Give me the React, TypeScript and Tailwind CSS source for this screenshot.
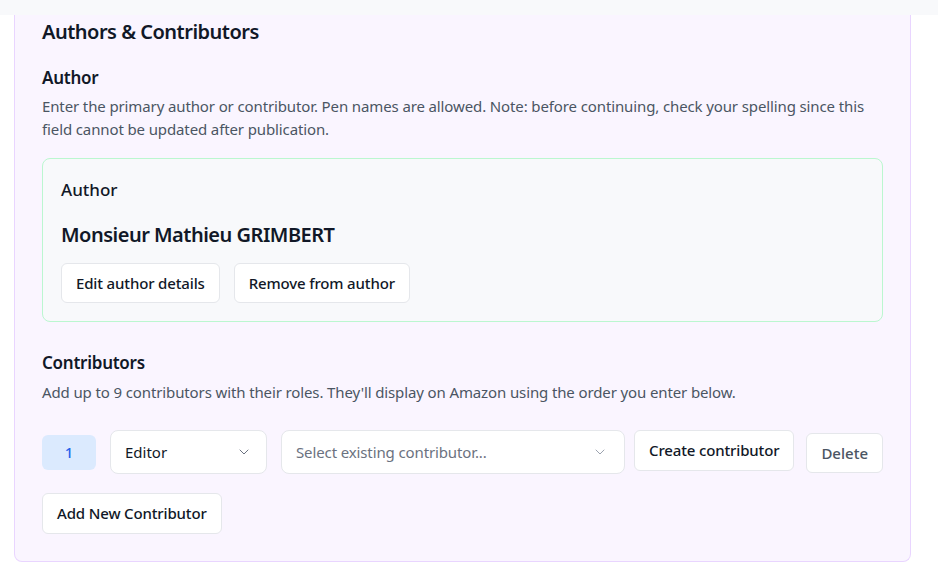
import React from "react";

function Chevron({ className }: { className?: string }) {
  return (
    <svg className={className} width="16" height="16" viewBox="0 0 24 24" fill="none" stroke="currentColor" strokeWidth="1.5" strokeLinecap="round" strokeLinejoin="round">
      <path d="M6 9l6 6 6-6" />
    </svg>
  );
}

export default function App() {
  return (
    <div className="min-h-[579px] bg-white text-[#111827]" style={{ fontFamily: '"Noto Sans", "Open Sans", sans-serif' }}>
      <div className="h-[15px] bg-[#f8f9fb]" />
      <div className="ml-[14px] mr-[27px] rounded-b-lg border border-t-0 border-[#e9d5ff] bg-[#faf5ff] px-[27px] pb-[27px] pt-[6px]">
        <h2 className="text-[20px] font-semibold leading-[22px] tracking-[-0.025em]">Authors &amp; Contributors</h2>
        <h3 className="mt-[24px] text-[17px] font-semibold leading-[22px] tracking-[-0.015em]">Author</h3>
        <p className="mt-[6px] text-[15px] leading-[23px] tracking-[-0.008em] text-[#4b5563]">
          Enter the primary author or contributor. Pen names are allowed. Note: before continuing, check your spelling since this field cannot be updated after publication.
        </p>
        <div className="mt-[17px] rounded-lg border border-[#bbf7d0] bg-[#f8f9fb] px-[18px] pb-[18px] pt-[20px]">
          <div className="text-[17px] font-medium leading-[22px]">Author</div>
          <div className="mt-[21px] text-[20px] font-semibold leading-[26px] tracking-[-0.025em]">Monsieur Mathieu GRIMBERT</div>
          <div className="mt-[15px] flex gap-[14px]">
            <button className="h-[40px] rounded-md border border-[#e5e7eb] bg-white px-[14px] text-[15px] font-medium tracking-[-0.01em]">Edit author details</button>
            <button className="h-[40px] rounded-md border border-[#e5e7eb] bg-white px-[14px] text-[15px] font-medium tracking-[-0.01em]">Remove from author</button>
          </div>
        </div>
        <h3 className="mt-[30px] text-[17px] font-semibold leading-[22px] tracking-[-0.015em]">Contributors</h3>
        <p className="mt-[7px] text-[15px] leading-[23px] tracking-[-0.008em] text-[#4b5563]">
          Add up to 9 contributors with their roles. They'll display on Amazon using the order you enter below.
        </p>
        <div className="mt-[26px] flex items-start">
          <div className="mt-[5px] flex h-[35px] w-[54px] shrink-0 items-center justify-center rounded-md bg-[#dbeafe] text-[15px] font-medium text-[#2563eb]">1</div>
          <div className="ml-[14px] flex h-[44px] w-[157px] shrink-0 items-center justify-between rounded-lg border border-[#e5e7eb] bg-white pl-[14px] pr-[14px] text-[15px]">
            <span>Editor</span>
            <Chevron className="text-[#6b7280]" />
          </div>
          <div className="ml-[14px] flex h-[44px] w-[344px] shrink-0 items-center justify-between rounded-lg border border-[#e5e7eb] bg-white pl-[14px] pr-[16px] text-[15px] tracking-[-0.008em] text-[#6b7280]">
            <span>Select existing contributor...</span>
            <Chevron className="text-[#9ca3af]" />
          </div>
          <button className="ml-[9px] h-[41px] shrink-0 whitespace-nowrap rounded-md border border-[#e5e7eb] bg-white px-[14px] text-[15px] font-medium tracking-[-0.01em]">Create contributor</button>
          <button className="ml-auto mt-[3px] h-[40px] shrink-0 rounded-md border border-[#e5e7eb] bg-white px-[14px] text-[15px] font-medium text-[#4b5563]">Delete</button>
        </div>
        <button className="mt-[19px] h-[41px] rounded-md border border-[#e5e7eb] bg-white px-[14px] text-[15px] font-medium tracking-[-0.01em]">Add New Contributor</button>
      </div>
    </div>
  );
}
